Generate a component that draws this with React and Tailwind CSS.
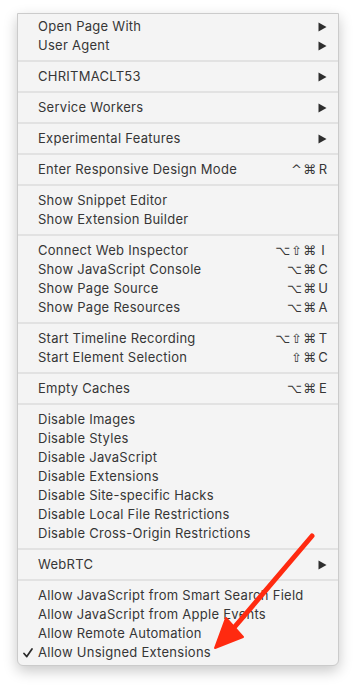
import React from 'react'

const groups = [
  [
    { label: 'Open Page With', sub: true },
    { label: 'User Agent', sub: true },
  ],
  [{ label: 'CHRITMACLT53', sub: true }],
  [{ label: 'Service Workers', sub: true }],
  [{ label: 'Experimental Features', sub: true }],
  [{ label: 'Enter Responsive Design Mode', mods: '^⌘', key: 'R' }],
  [{ label: 'Show Snippet Editor' }, { label: 'Show Extension Builder' }],
  [
    { label: 'Connect Web Inspector', mods: '⌥⇧⌘', key: 'I' },
    { label: 'Show JavaScript Console', mods: '⌥⌘', key: 'C' },
    { label: 'Show Page Source', mods: '⌥⌘', key: 'U' },
    { label: 'Show Page Resources', mods: '⌥⌘', key: 'A' },
  ],
  [
    { label: 'Start Timeline Recording', mods: '⌥⇧⌘', key: 'T' },
    { label: 'Start Element Selection', mods: '⇧⌘', key: 'C' },
  ],
  [{ label: 'Empty Caches', mods: '⌥⌘', key: 'E' }],
  [
    { label: 'Disable Images' },
    { label: 'Disable Styles' },
    { label: 'Disable JavaScript' },
    { label: 'Disable Extensions' },
    { label: 'Disable Site-specific Hacks' },
    { label: 'Disable Local File Restrictions' },
    { label: 'Disable Cross-Origin Restrictions' },
  ],
  [{ label: 'WebRTC', sub: true }],
  [
    { label: 'Allow JavaScript from Smart Search Field' },
    { label: 'Allow JavaScript from Apple Events' },
    { label: 'Allow Remote Automation' },
    { label: 'Allow Unsigned Extensions', checked: true },
  ],
]

function Row({ item }) {
  return (
    <div className="relative flex h-[19px] items-center pl-[20px] pr-[9px]">
      {item.checked && (
        <svg className="absolute left-[5px] top-[5px]" width="10" height="10" viewBox="0 0 10 10">
          <path d="M1 5.5 L3.8 8.6 L9 1" fill="none" stroke="#2a2a2a" strokeWidth="1.7" strokeLinecap="round" strokeLinejoin="round" />
        </svg>
      )}
      <span className="flex-1 whitespace-nowrap tracking-[0.27px]">{item.label}</span>
      {item.sub && (
        <svg className="mr-[2px]" width="9" height="10" viewBox="0 0 9 10">
          <path d="M0.5 0.5 L8.5 5 L0.5 9.5 Z" fill="#2e2e2e" />
        </svg>
      )}
      {item.key && (
        <span className="flex items-center">
          <span className="tracking-[1px] font-['DejaVu_Sans',sans-serif] text-[13px]">{item.mods}</span>
          <span className="w-[12px] text-center">{item.key}</span>
        </span>
      )}
    </div>
  )
}

export default function App() {
  return (
    <div className="relative min-h-screen bg-white pt-[13px] pl-[17px]">
      <div className="w-[322px] rounded-b-[6px] border border-[#cbcbcb] bg-[#f4f4f4] py-[3px] text-[13px] text-[#363636] font-['Inter',sans-serif] shadow-[0_5px_14px_rgba(0,0,0,0.22)]">
        {groups.map((g, i) => (
          <div key={i}>
            {i > 0 && <div className="my-[5px] h-[2px] bg-[#e2e2e2]" />}
            {g.map((item) => (
              <Row key={item.label} item={item} />
            ))}
          </div>
        ))}
      </div>

      {/* red annotation arrow */}
      <svg className="absolute left-0 top-0" width="356" height="687" viewBox="0 0 356 687">
        <line x1="312" y1="536" x2="232" y2="630" stroke="#ff2a10" strokeWidth="5" strokeLinecap="round" />
        <path d="M215 648 L226 618 L243 637 Z" fill="#ff2a10" stroke="#ff2a10" strokeWidth="2" strokeLinejoin="round" />
      </svg>
    </div>
  )
}
